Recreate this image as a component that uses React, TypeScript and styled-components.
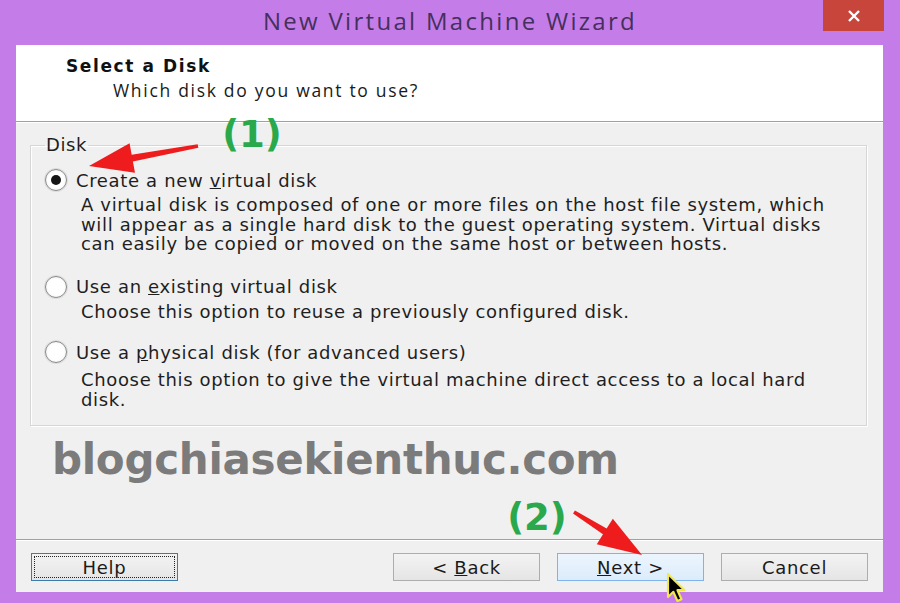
import React from "react";
import styled, { createGlobalStyle } from "styled-components";

const Global = createGlobalStyle`
  html, body { margin: 0; padding: 0; background: #c47de8; }
  #root { width: 900px; height: 603px; }
`;

const Window = styled.div`
  position: relative;
  width: 900px;
  height: 603px;
  background: #c47de8;
  display: flex;
  flex-direction: column;
  overflow: hidden;
  font-family: "DejaVu Sans", Verdana, sans-serif;
  color: #1e1e1e;
`;

const TitleBar = styled.div`
  height: 45px;
  display: grid;
  grid-template-columns: 1fr auto 1fr;
  align-items: start;
`;

const Title = styled.div`
  grid-column: 2;
  padding-top: 5px;
  font-family: "Open Sans", "Noto Sans", sans-serif;
  font-size: 24px;
  line-height: 32px;
  color: #45305c;
  letter-spacing: 2.3px;
`;

const CloseButton = styled.div`
  grid-column: 3;
  justify-self: end;
  margin-right: 16px;
  width: 61px;
  height: 31px;
  background: #c8453c;
  display: flex;
  align-items: center;
  justify-content: center;
`;

const Client = styled.div`
  flex: 1;
  margin: 0 17px 11px 16px;
  background: #f0f0f0;
  display: flex;
  flex-direction: column;
`;

const Header = styled.div`
  height: 77px;
  background: #ffffff;
  border-bottom: 1px solid #a0a0a0;
  box-sizing: border-box;
  padding: 10px 0 0 50px;
`;

const HeaderTitle = styled.div`
  font-weight: bold;
  font-size: 17px;
  line-height: 22px;
  letter-spacing: 1.6px;
  color: #111;
`;

const HeaderSub = styled.div`
  font-family: "Open Sans", "Noto Sans", sans-serif;
  font-size: 17.5px;
  line-height: 22px;
  letter-spacing: 1.7px;
  margin: 2px 0 0 47px;
  color: #1a1a1a;
`;

const Body = styled.div`
  flex: 1;
  padding: 13px 16px 0 14px;
  display: flex;
  flex-direction: column;
  box-shadow: inset 0 1px 0 #ffffff;
`;

const GroupBox = styled.fieldset`
  margin: 0;
  padding: 0 22px 16px 14px;
  border: 1px solid #d6d6d6;
  box-shadow: inset 1px 1px 0 #ffffff, 1px 1px 0 #ffffff;
  min-width: 0;
`;

const Legend = styled.legend`
  margin-left: 0;
  padding: 0 1px;
  font-size: 18px;
  line-height: 20px;
  letter-spacing: 0.6px;
  color: #1e1e1e;
`;

const Option = styled.div<{ $gap: number }>`
  margin-top: ${(p) => p.$gap}px;
`;

const OptionRow = styled.div`
  display: flex;
  align-items: center;
  height: 22px;
  gap: 9px;
  font-size: 18px;
  letter-spacing: 0.65px;
`;

const Radio = styled.span<{ $checked?: boolean }>`
  width: 20px;
  height: 20px;
  border-radius: 50%;
  border: 1px solid #8a8a8a;
  background: radial-gradient(circle, #ffffff 55%, #e4e4e4 100%);
  box-shadow: 0 0 0 1px #dcdcdc;
  display: flex;
  align-items: center;
  justify-content: center;
  flex-shrink: 0;
  &::after {
    content: "";
    width: 10px;
    height: 10px;
    border-radius: 50%;
    background: ${(p) => (p.$checked ? "#151515" : "transparent")};
  }
`;

const Desc = styled.div<{ $top: number }>`
  margin: ${(p) => p.$top}px 0 0 36px;
  font-size: 18px;
  line-height: 19.5px;
  letter-spacing: 0.65px;
  color: #1e1e1e;
`;

const Watermark = styled.div`
  margin: 8px 0 0 22px;
  font-family: "DejaVu Sans", sans-serif;
  font-weight: bold;
  font-size: 42px;
  line-height: 52px;
  color: #7b7b7b;
  letter-spacing: -0.3px;
`;

const Footer = styled.div`
  height: 53px;
  box-sizing: border-box;
  border-top: 1px solid #a0a0a0;
  box-shadow: inset 0 1px 0 #ffffff;
  padding: 13px 15px 0 15px;
  display: flex;
  gap: 17px;
`;

const Spacer = styled.div`
  flex: 1;
`;

const Button = styled.div<{ $variant?: "focus" | "hot" }>`
  position: relative;
  width: 147px;
  height: 28px;
  box-sizing: border-box;
  display: flex;
  align-items: center;
  justify-content: center;
  font-size: 18px;
  letter-spacing: 0.7px;
  color: #1a1a1a;
  border: 1px solid
    ${(p) => (p.$variant === "focus" ? "#3d7bad" : p.$variant === "hot" ? "#7eb4ea" : "#adadad")};
  background: ${(p) =>
    p.$variant === "hot"
      ? "linear-gradient(#ecf5fd, #dcecfc)"
      : "linear-gradient(#f3f3f3, #e5e5e5)"};
  &::before {
    content: "";
    display: ${(p) => (p.$variant === "focus" ? "block" : "none")};
    position: absolute;
    inset: 2px;
    border: 1px dotted #222;
  }
`;

const Overlay = styled.svg`
  position: absolute;
  left: 0;
  top: 0;
  pointer-events: none;
`;

function arrowPoints(L: number, h: number, w: number) {
  return `0,-1.8 ${L - h},-3.4 ${L - h},-${w} ${L},0 ${L - h},${w} ${L - h},3.4 0,1.8`;
}

function Arrow({ x1, y1, x2, y2 }: { x1: number; y1: number; x2: number; y2: number }) {
  const dx = x2 - x1;
  const dy = y2 - y1;
  const L = Math.hypot(dx, dy);
  const a = (Math.atan2(dy, dx) * 180) / Math.PI;
  return (
    <polygon
      points={arrowPoints(L, 44, 15)}
      fill="#ee1c1c"
      transform={`translate(${x1} ${y1}) rotate(${a})`}
    />
  );
}

export default function App() {
  return (
    <>
      <Global />
      <Window>
        <TitleBar>
          <Title>New Virtual Machine Wizard</Title>
          <CloseButton>
            <svg width="14" height="12" viewBox="0 0 14 12">
              <path d="M2 1 L12 11 M12 1 L2 11" stroke="#ffffff" strokeWidth="2.4" />
            </svg>
          </CloseButton>
        </TitleBar>
        <Client>
          <Header>
            <HeaderTitle>Select a Disk</HeaderTitle>
            <HeaderSub>Which disk do you want to use?</HeaderSub>
          </Header>
          <Body>
            <GroupBox>
              <Legend>Disk</Legend>
              <Option $gap={14}>
                <OptionRow>
                  <Radio $checked />
                  <span>
                    Create a new <u>v</u>irtual disk
                  </span>
                </OptionRow>
                <Desc $top={4}>
                  A virtual disk is composed of one or more files on the host file system, which
                  will appear as a single hard disk to the guest operating system. Virtual disks
                  can easily be copied or moved on the same host or between hosts.
                </Desc>
              </Option>
              <Option $gap={22}>
                <OptionRow>
                  <Radio />
                  <span>
                    Use an <u>e</u>xisting virtual disk
                  </span>
                </OptionRow>
                <Desc $top={4}>Choose this option to reuse a previously configured disk.</Desc>
              </Option>
              <Option $gap={20}>
                <OptionRow>
                  <Radio />
                  <span>
                    Use a <u>p</u>hysical disk (for advanced users)
                  </span>
                </OptionRow>
                <Desc $top={7}>
                  Choose this option to give the virtual machine direct access to a local hard
                  disk.
                </Desc>
              </Option>
            </GroupBox>
            <Watermark>blogchiasekienthuc.com</Watermark>
          </Body>
          <Footer>
            <Button $variant="focus">Help</Button>
            <Spacer />
            <Button>
              <span>
                &lt; <u>B</u>ack
              </span>
            </Button>
            <Button $variant="hot">
              <span>
                <u>N</u>ext &gt;
              </span>
            </Button>
            <Button>Cancel</Button>
          </Footer>
        </Client>
        <Overlay width="900" height="603" viewBox="0 0 900 603">
          <Arrow x1={198} y1={146} x2={89} y2={166} />
          <Arrow x1={574} y1={512} x2={642} y2={555} />
          <text
            x="252"
            y="147"
            textAnchor="middle"
            fontFamily="DejaVu Sans, sans-serif"
            fontWeight="bold"
            fontSize="37"
            fill="#2aa84c"
          >
            (1)
          </text>
          <text
            x="537"
            y="530"
            textAnchor="middle"
            fontFamily="DejaVu Sans, sans-serif"
            fontWeight="bold"
            fontSize="37"
            fill="#2aa84c"
          >
            (2)
          </text>
          <g transform="translate(668 574) scale(1.35)">
            <path
              d="M0 0 L0 17 L4 13.2 L7 20 L10 18.7 L7 12 L12.3 12 Z"
              fill="#000"
              stroke="#f3e84a"
              strokeWidth="1.6"
              strokeLinejoin="round"
            />
          </g>
        </Overlay>
      </Window>
    </>
  );
}
